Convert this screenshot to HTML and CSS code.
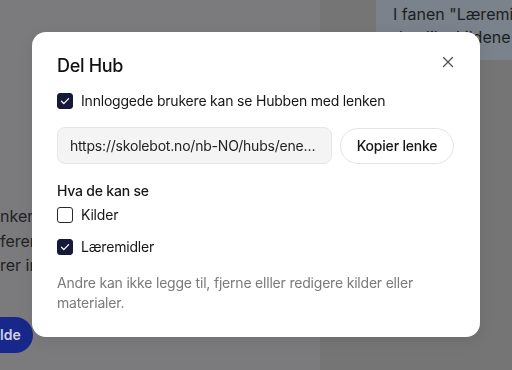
FILE: index.html
```html
<!DOCTYPE html>
<html lang="nb">
<head>
<meta charset="utf-8">
<title>Del Hub</title>
<link rel="stylesheet" href="styles.css">
</head>
<body>
<div class="app">
  <main class="main">
    <div class="main-text">
      <p>nker til</p>
      <p>ferer</p>
      <p>rer inn</p>
    </div>
    <div class="main-actions">
      <button class="primary">lde</button>
    </div>
  </main>
  <aside class="side">
    <div class="bubble">
      <p>I fanen "Læremidler" finner du</p>
      <p>de ulike kildene etter, på</p>
    </div>
  </aside>
</div>

<div class="overlay">
  <div class="modal" role="dialog" aria-labelledby="modal-title">
    <header class="modal-head">
      <h2 id="modal-title" class="modal-title">Del Hub</h2>
      <button class="close" aria-label="Lukk">
        <svg width="12" height="12" viewBox="0 0 12 12" fill="none" stroke="currentColor" stroke-width="1.4" stroke-linecap="round"><path d="M1.5 1.5l9 9M10.5 1.5l-9 9"/></svg>
      </button>
    </header>

    <label class="check-row first">
      <span class="box checked"><svg width="12" height="12" viewBox="0 0 12 12" fill="none" stroke="#fff" stroke-width="1.3" stroke-linecap="round" stroke-linejoin="round"><path d="M2.5 6.3l2.3 2.3 4.8-5"/></svg></span>
      <span>Innloggede brukere kan se Hubben med lenken</span>
    </label>

    <div class="link-row">
      <div class="link-field"><span class="link-text">https://skolebot.no/nb-NO/hubs/energi-og-klima-8f3a2c</span></div>
      <button class="copy">Kopier lenke</button>
    </div>

    <h3 class="section-title">Hva de kan se</h3>
    <label class="check-row">
      <span class="box"></span>
      <span>Kilder</span>
    </label>
    <label class="check-row second">
      <span class="box checked"><svg width="12" height="12" viewBox="0 0 12 12" fill="none" stroke="#fff" stroke-width="1.3" stroke-linecap="round" stroke-linejoin="round"><path d="M2.5 6.3l2.3 2.3 4.8-5"/></svg></span>
      <span>Læremidler</span>
    </label>

    <p class="note">Andre kan ikke legge til, fjerne elller redigere kilder eller materialer.</p>
  </div>
</div>
</body>
</html>
```

FILE: styles.css
```css
* { box-sizing: border-box; }
html, body { margin: 0; padding: 0; }
body {
  width: 512px;
  height: 370px;
  overflow: hidden;
  font-family: Inter, "Noto Sans", sans-serif;
  background: #7b7b7d;
}
p { margin: 0; }

.app {
  display: flex;
  width: 512px;
  height: 370px;
}
.main {
  width: 320px;
  display: flex;
  flex-direction: column;
  padding-top: 204px;
}
.main-text {
  font-size: 16px;
  line-height: 24.5px;
  color: #222224;
}
.main-actions {
  margin-top: 39px;
}
.primary {
  border: none;
  background: #17288a;
  color: #cfd2e0;
  font-family: Inter, sans-serif;
  font-weight: 600;
  font-size: 14px;
  height: 36px;
  width: 33px;
  padding: 0;
  text-align: left;
  border-radius: 0 18px 18px 0;
}
.side {
  flex: 1;
  background: #757575;
  display: flex;
  justify-content: flex-end;
  align-items: flex-start;
}
.bubble {
  width: 136px;
  height: 60px;
  background: #7a828b;
  padding: 3px 0 0 17px;
  font-size: 16px;
  line-height: 23px;
  color: #1c1e21;
  white-space: nowrap;
  overflow: hidden;
}

.overlay {
  position: fixed;
  inset: 0;
  padding: 32px 32px 0 32px;
}
.modal {
  width: 448px;
  background: #fff;
  border-radius: 14px;
  padding: 20px 26px 24px 25px;
  box-shadow: 0 4px 16px rgba(0,0,0,0.08);
  color: #111;
  letter-spacing: -0.2px;
}
.modal-head {
  display: flex;
  justify-content: space-between;
  align-items: center;
  height: 28px;
}
.modal-title {
  margin: 0;
  font-size: 18px;
  font-weight: 500;
  line-height: 28px;
  letter-spacing: -0.3px;
  color: #111;
}
.close {
  border: none;
  background: none;
  padding: 0;
  width: 12px;
  height: 12px;
  margin: -8px 0 0 0;
  color: #555;
  display: flex;
}

.check-row {
  display: flex;
  align-items: center;
  gap: 8px;
  font-size: 14px;
  line-height: 20px;
  color: #161616;
}
.check-row.first { margin-top: 11px; }
.check-row.second { margin-top: 12px; }
.box {
  width: 16px;
  height: 16px;
  border: 1.5px solid #2a2a2a;
  border-radius: 3px;
  display: flex;
  align-items: center;
  justify-content: center;
  flex-shrink: 0;
}
.box.checked {
  background: #161a3a;
  border-color: #161a3a;
}

.link-row {
  margin-top: 16px;
  display: flex;
  gap: 8px;
  align-items: center;
}
.link-field {
  width: 275px;
  flex-shrink: 0;
  height: 37px;
  background: #f4f4f4;
  border: 1px solid #e6e6e6;
  border-radius: 8px;
  padding: 0 12px;
  font-size: 14px;
  line-height: 35px;
  color: #222;
  white-space: nowrap;
  overflow: hidden;
  text-overflow: ellipsis;
}
.copy {
  flex-shrink: 0;
  white-space: nowrap;
  height: 36px;
  width: 114px;
  padding: 0;
  border: 1px solid #e4e4e4;
  background: #fff;
  border-radius: 18px;
  font-family: Inter, sans-serif;
  font-size: 14px;
  font-weight: 500;
  letter-spacing: -0.2px;
  color: #161616;
}

.section-title {
  margin: 17px 0 4px;
  font-size: 14px;
  line-height: 20px;
  font-weight: 500;
  color: #161616;
}

.note {
  margin-top: 16px;
  font-size: 14px;
  line-height: 20px;
  color: #7a7a7a;
}
```
